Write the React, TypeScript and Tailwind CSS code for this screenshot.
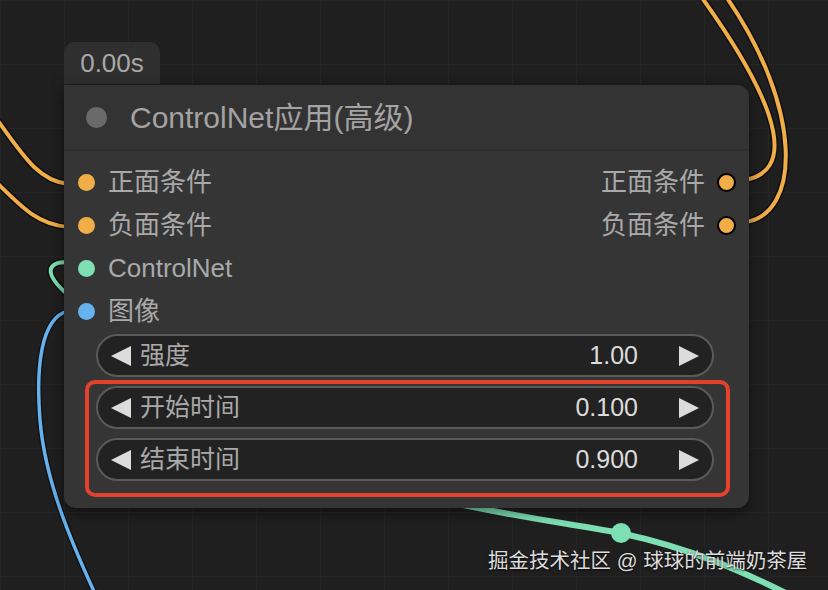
import React from "react";

const FONT = { fontFamily: '"Liberation Sans", "Noto Sans CJK SC", sans-serif' };

function Dot({ color, ring = false }: { color: string; ring?: boolean }) {
  return (
    <span
      className={`block rounded-full shrink-0 ${ring ? "w-[19px] h-[19px] border-2 border-black" : "w-[17px] h-[17px]"} ${color}`}
    />
  );
}

function LeftArrow() {
  return (
    <svg width="22" height="22" viewBox="0 0 22 22" className="shrink-0">
      <polygon points="21,1 21,21 1,11" fill="#dcdcdc" />
    </svg>
  );
}
function RightArrow() {
  return (
    <svg width="22" height="22" viewBox="0 0 22 22" className="shrink-0">
      <polygon points="1,1 1,21 21,11" fill="#dcdcdc" />
    </svg>
  );
}

function Widget({ label, value }: { label: string; value: string }) {
  return (
    <div className="h-[43px] w-[618px] rounded-full bg-[#222222] border-2 border-[#5a5a5a] flex items-center pl-[12px] pr-[12px] text-[25px]">
      <LeftArrow />
      <span className="ml-[8px] text-[#a9a9a9] flex-1">{label}</span>
      <span className="text-[#dcdcdc] mr-[40px]">{value}</span>
      <RightArrow />
    </div>
  );
}

export default function App() {
  return (
    <div className="relative w-[828px] h-[590px] overflow-hidden bg-[#1f1f1f]" style={FONT}>
      <svg className="absolute inset-0" width="828" height="590" viewBox="0 0 828 590">
        <defs>
          <pattern id="g" width="64" height="64" patternUnits="userSpaceOnUse">
            <path d="M0 0 H64 M0 0 V64" stroke="#252525" strokeWidth="2" fill="none" />
          </pattern>
          <pattern id="gs" width="16" height="16" patternUnits="userSpaceOnUse">
            <path d="M0 0 H16 M0 0 V16" stroke="#222222" strokeWidth="1" fill="none" />
          </pattern>
        </defs>
        <rect width="828" height="590" fill="url(#gs)" />
        <rect width="828" height="590" fill="url(#g)" />
        {/* orange left */}
        <path d="M -10 110 C 20 150, 35 180, 68 184" stroke="#000" strokeWidth="7" fill="none" opacity="0.5" />
        <path d="M -10 110 C 20 150, 35 180, 68 184" stroke="#f0ad48" strokeWidth="4" fill="none" />
        <path d="M -10 176 C 20 205, 35 224, 68 227" stroke="#000" strokeWidth="7" fill="none" opacity="0.5" />
        <path d="M -10 176 C 20 205, 35 224, 68 227" stroke="#f0ad48" strokeWidth="4" fill="none" />
        {/* orange right */}
        <path d="M 745 180 C 790 172, 790 120, 700 -5" stroke="#000" strokeWidth="7" fill="none" opacity="0.5" />
        <path d="M 745 180 C 790 172, 790 120, 700 -5" stroke="#f0ad48" strokeWidth="4" fill="none" />
        <path d="M 745 222 C 800 215, 805 110, 725 -5" stroke="#000" strokeWidth="7" fill="none" opacity="0.5" />
        <path d="M 745 222 C 800 215, 805 110, 725 -5" stroke="#f0ad48" strokeWidth="4" fill="none" />
        {/* teal loop */}
        <path d="M 68 262 C 48 262, 42 272, 68 295" stroke="#000" strokeWidth="7" fill="none" opacity="0.5" />
        <path d="M 68 262 C 48 262, 42 272, 68 295" stroke="#7ddfb3" strokeWidth="4" fill="none" />
        {/* blue */}
        <path d="M 68 311 C 40 318, 36 370, 40 420 C 45 480, 70 540, 98 600" stroke="#000" strokeWidth="6" fill="none" opacity="0.5" />
        <path d="M 68 311 C 40 318, 36 370, 40 420 C 45 480, 70 540, 98 600" stroke="#66b2ee" strokeWidth="3.5" fill="none" />
        {/* teal lower */}
        <path d="M 440 500 C 520 518, 560 522, 620 533 C 690 548, 740 570, 800 600" stroke="#7ddfb3" strokeWidth="6" fill="none" />
        <circle cx="621" cy="533" r="10" fill="#7ddfb3" />
      </svg>

      {/* node */}
      <div className="absolute left-[64px] top-[42px] flex flex-col">
        <div className="w-[96px] h-[42px] rounded-t-[10px] bg-[#2f2f2f] flex items-center justify-center text-[26px] text-[#a8a8a8]">
          0.00s
        </div>
        <div className="relative mt-[1px] w-[685px] h-[423px] rounded-[12px] rounded-tl-none bg-[#353535] shadow-[0_4px_14px_rgba(0,0,0,0.5)] flex flex-col">
          <div className="h-[66px] flex items-center pl-[22px] border-b-2 border-[#2e2e2e] bg-[#333333] rounded-tr-[12px]">
            <span className="block w-[21px] h-[21px] rounded-full bg-[#6a6a6a]" />
            <span className="ml-[23px] text-[30px] text-[#a3a3a3]">ControlNet应用(高级)</span>
          </div>
          <div className="flex flex-col pt-[10px] text-[26px] text-[#a9a9a9]">
            <div className="h-[43px] flex items-center pl-[14px] pr-[13px]">
              <Dot color="bg-[#f0ad48]" />
              <span className="ml-[13px] flex-1">正面条件</span>
              <span className="mr-[12px]">正面条件</span>
              <Dot color="bg-[#f0ad48]" ring />
            </div>
            <div className="h-[43px] flex items-center pl-[14px] pr-[13px]">
              <Dot color="bg-[#f0ad48]" />
              <span className="ml-[13px] flex-1">负面条件</span>
              <span className="mr-[12px]">负面条件</span>
              <Dot color="bg-[#f0ad48]" ring />
            </div>
            <div className="h-[43px] flex items-center pl-[14px]">
              <Dot color="bg-[#7ddfb3]" />
              <span className="ml-[13px]">ControlNet</span>
            </div>
            <div className="h-[43px] flex items-center pl-[14px]">
              <Dot color="bg-[#66b2ee]" />
              <span className="ml-[13px]">图像</span>
            </div>
          </div>
          <div className="flex flex-col gap-[9px] pl-[32px] mt-[1px]">
            <Widget label="强度" value="1.00" />
            <Widget label="开始时间" value="0.100" />
            <Widget label="结束时间" value="0.900" />
          </div>
          <div className="absolute left-[21px] top-[295px] w-[645px] h-[117px] border-4 border-[#e4412c] rounded-[10px]" />
        </div>
      </div>

      <div className="absolute left-[488px] top-[546px] text-[20.5px] text-[#dddddd] [text-shadow:0_1px_2px_rgba(0,0,0,0.8)]">
        掘金技术社区 @ 球球的前端奶茶屋
      </div>
    </div>
  );
}
